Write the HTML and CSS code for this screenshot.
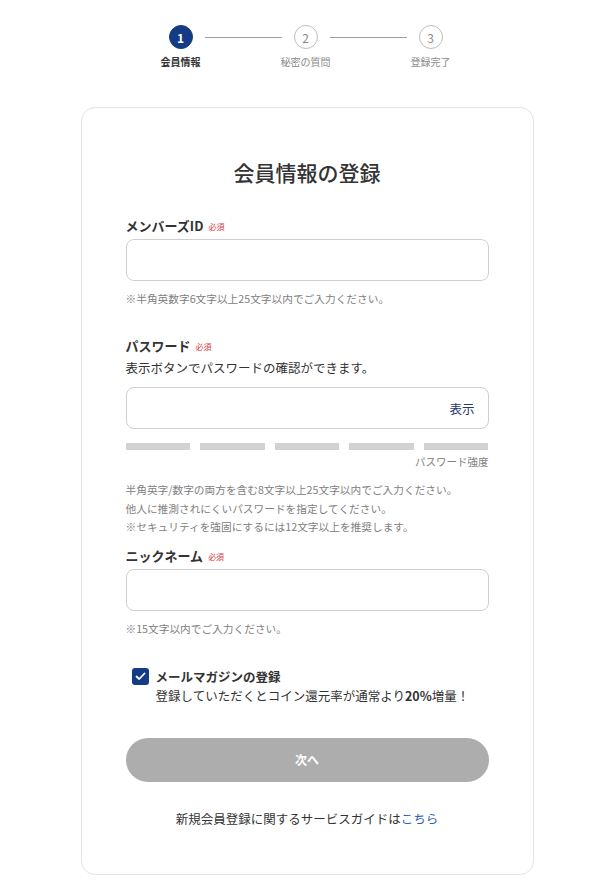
FILE: index.html
```html
<!DOCTYPE html>
<html lang="ja">
<head>
  <meta charset="utf-8">
  <title>会員情報の登録</title>
  <link rel="stylesheet" href="styles.css">
</head>
<body>
  <div class="page">
    <ol class="stepper">
      <li class="step active">
        <span class="step-num">1</span>
        <span class="step-label">会員情報</span>
      </li>
      <li class="step-line"></li>
      <li class="step">
        <span class="step-num">2</span>
        <span class="step-label">秘密の質問</span>
      </li>
      <li class="step-line"></li>
      <li class="step">
        <span class="step-num">3</span>
        <span class="step-label">登録完了</span>
      </li>
    </ol>

    <div class="card">
      <h1>会員情報の登録</h1>

      <form id="register-form">
        <label class="field-label" for="memberId">メンバーズID<span class="required">必須</span></label>
        <input class="text-input" type="text" id="memberId" name="memberId">
        <p class="hint">※半角英数字6文字以上25文字以内でご入力ください。</p>

        <label class="field-label gap-top" for="password">パスワード<span class="required">必須</span></label>
        <p class="sub-text">表示ボタンでパスワードの確認ができます。</p>
        <div class="password-box">
          <input class="text-input" type="password" id="password" name="password">
          <button type="button" class="show-btn">表示</button>
        </div>
        <div class="strength">
          <span></span><span></span><span></span><span></span><span></span>
        </div>
        <p class="strength-label">パスワード強度</p>
        <p class="hint hint-block">半角英字/数字の両方を含む8文字以上25文字以内でご入力ください。<br>他人に推測されにくいパスワードを指定してください。<br>※セキュリティを強固にするには12文字以上を推奨します。</p>

        <label class="field-label nick-label" for="nickname">ニックネーム<span class="required">必須</span></label>
        <input class="text-input" type="text" id="nickname" name="nickname">
        <p class="hint">※15文字以内でご入力ください。</p>

        <label class="check-row">
          <span class="checkbox">
            <svg width="11" height="9" viewBox="0 0 11 9"><path d="M1.5 4.5 L4.2 7 L9.5 1.5" fill="none" stroke="#fff" stroke-width="1.8" stroke-linecap="round" stroke-linejoin="round"/></svg>
          </span>
          <span class="check-text">
            <strong>メールマガジンの登録</strong>
            <span>登録していただくとコイン還元率が通常より<b>20%</b>増量！</span>
          </span>
        </label>

        <button type="submit" class="next-btn" disabled>次へ</button>
      </form>

      <p class="guide">新規会員登録に関するサービスガイドは<a href="#">こちら</a></p>
    </div>
  </div>
</body>
</html>
```

FILE: styles.css
```css
body {
  font-family: "Noto Sans CJK JP", "Noto Sans", sans-serif;
  background-color: #ffffff;
  color: #333333;
  margin: 0;
  padding: 0 0 0 14px;
}

.page {
  width: 453px;
  margin: 0 auto;
  padding-top: 25px;
}

/* stepper */
.stepper {
  list-style: none;
  margin: 0;
  padding: 0;
  display: flex;
  justify-content: center;
  margin-left: -3px;
}

.step {
  width: 40px;
  display: flex;
  flex-direction: column;
  align-items: center;
}

.step-num {
  width: 22px;
  height: 22px;
  border: 1px solid #bdbdbd;
  border-radius: 50%;
  display: flex;
  align-items: center;
  justify-content: center;
  font-size: 12px;
  color: #8a8a8a;
  background-color: #ffffff;
}

.step-label {
  margin-top: 6px;
  font-size: 10px;
  line-height: 14px;
  color: #8a8a8a;
  white-space: nowrap;
}

.step.active .step-num {
  background-color: #143c84;
  border-color: #143c84;
  color: #ffffff;
  font-weight: bold;
}

.step.active .step-label {
  color: #333333;
  font-weight: bold;
}

.step-line {
  width: 77px;
  height: 1px;
  margin: 12px 4px 0;
  background-color: #9e9e9e;
}

/* card */
.card {
  margin-top: 38px;
  border: 1px solid #e4e4e4;
  border-radius: 14px;
  padding: 50px 44px 46px;
}

h1 {
  margin: 0;
  text-align: center;
  font-size: 21px;
  line-height: 28px;
  font-weight: 500;
  color: #333333;
}

form {
  margin-top: 31px;
  display: flex;
  flex-direction: column;
}

.field-label {
  display: block;
  font-size: 13px;
  line-height: 18px;
  font-weight: bold;
  color: #333333;
}

.gap-top {
  margin-top: 30px;
}

.nick-label {
  margin-top: 10px;
}

.required {
  margin-left: 5px;
  font-size: 8px;
  font-weight: normal;
  color: #d9363e;
  vertical-align: 1px;
}

.text-input {
  display: block;
  width: 100%;
  height: 42px;
  margin-top: 3px;
  border: 1px solid #cfcfcf;
  border-radius: 8px;
  box-sizing: border-box;
  padding: 0 12px;
  font-size: 14px;
  background-color: #ffffff;
}

.hint {
  margin: 10px 0 0;
  font-size: 10.7px;
  line-height: 16px;
  color: #808080;
}

.hint-block {
  margin-top: 11px;
  font-size: 10.7px;
  line-height: 18.5px;
}

.sub-text {
  margin: 3px 0 0;
  font-size: 12.5px;
  line-height: 18px;
  color: #333333;
}

.password-box {
  position: relative;
  margin-top: 7px;
}

.show-btn {
  position: absolute;
  right: 14px;
  top: 3px;
  height: 42px;
  border: none;
  background: none;
  padding: 0;
  font-family: inherit;
  font-size: 12.5px;
  color: #1f3a6e;
  cursor: pointer;
}

.strength {
  display: flex;
  gap: 10px;
  margin-top: 14px;
}

.strength span {
  flex: 1;
  height: 7px;
  background-color: #d2d2d2;
}

.strength-label {
  margin: 4px 0 0;
  text-align: right;
  font-size: 10.5px;
  line-height: 16px;
  color: #808080;
}

.check-row {
  display: flex;
  gap: 7px;
  margin-top: 30px;
  padding-left: 6px;
  cursor: pointer;
}

.checkbox {
  width: 17px;
  height: 17px;
  margin-top: 1px;
  border-radius: 3px;
  background-color: #143c84;
  display: flex;
  align-items: center;
  justify-content: center;
  flex-shrink: 0;
}

.check-text {
  display: flex;
  flex-direction: column;
  font-size: 12.5px;
  line-height: 19px;
}

.check-text strong {
  font-size: 12.5px;
}

.next-btn {
  margin-top: 33px;
  height: 44px;
  border: none;
  border-radius: 22px;
  background-color: #adadad;
  color: #ffffff;
  font-family: inherit;
  font-size: 12px;
  font-weight: bold;
}

.guide {
  margin: 28px 0 0;
  text-align: center;
  font-size: 12.5px;
  line-height: 18px;
  color: #333333;
}

.guide a {
  color: #2a62b4;
  text-decoration: none;
}
```
